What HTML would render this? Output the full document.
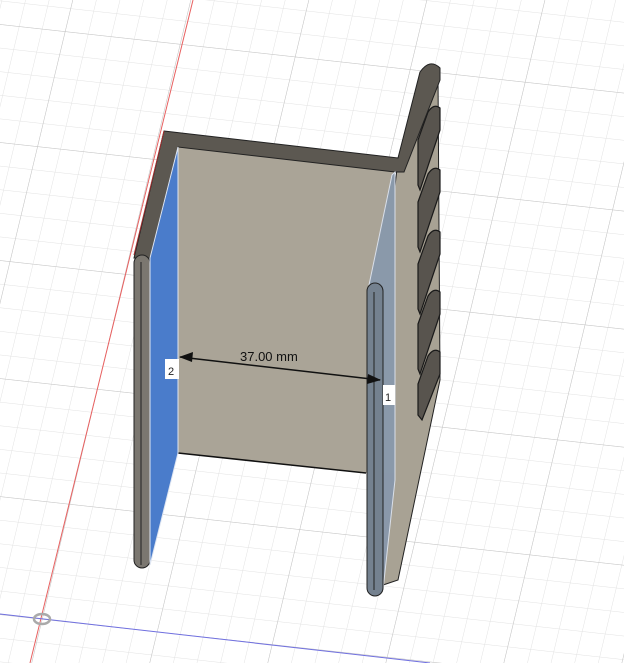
<!DOCTYPE html>
<html><head><meta charset="utf-8"><style>
html,body{margin:0;padding:0;background:#fff;}
svg{display:block;}
</style></head><body>
<svg width="624" height="663" viewBox="0 0 624 663" xmlns="http://www.w3.org/2000/svg">
<defs>
<pattern id="minor" width="23" height="23" patternUnits="userSpaceOnUse" patternTransform="matrix(1,0.11,-0.24,1,42,619)">
<path d="M0 0H23M0 0V23" stroke="#e2e2e2" stroke-width="1" fill="none"/>
</pattern>
<pattern id="major" width="115" height="115" patternUnits="userSpaceOnUse" patternTransform="matrix(1,0.11,-0.24,1,42,619)">
<path d="M0 0H115M0 0V115" stroke="#c4c4c4" stroke-width="1" fill="none"/>
</pattern>
</defs>
<rect width="624" height="663" fill="#fff"/>
<rect width="624" height="663" fill="url(#minor)"/>
<rect width="624" height="663" fill="url(#major)"/>
<line x1="193" y1="0" x2="30" y2="663" stroke="#e86060" stroke-width="1"/>
<line x1="0" y1="614" x2="430" y2="663" stroke="#7070e0" stroke-width="1"/>
<ellipse cx="42" cy="619" rx="8" ry="5" fill="none" stroke="#aaa" stroke-width="2.5"/>

<!-- right exterior beige -->
<polygon points="398,160 438,75 440,380 398,580 383,585 383,290" fill="#a8a294" stroke="#222" stroke-width="1"/>
<!-- fins -->
<g fill="#58544e" stroke="#1a1a1a" stroke-width="1.2">
<path d="M428,112 Q434,103 440,108 L440,130 L420,190 L418,185 L418,140 Z"/>
<path d="M428,174 Q434,165 440,170 L440,192 L420,252 L418,247 L418,202 Z"/>
<path d="M428,236 Q434,227 440,232 L440,254 L420,314 L418,309 L418,264 Z"/>
<path d="M428,296 Q434,287 440,292 L440,314 L420,374 L418,369 L418,324 Z"/>
<path d="M428,356 Q434,347 440,352 L440,374 L422,420 L418,415 L418,384 Z"/>
</g>
<!-- back wall interior -->
<polygon points="178,147 395,172 395,473 365,473 178,453" fill="#aaa497"/>
<line x1="178" y1="453" x2="366" y2="473" stroke="#111" stroke-width="1.5"/>
<!-- top strip + big column -->
<path d="M164,131 L398,158 L420,72 Q430,58 440,68 L440,80 L404,172 L395,172 L178,147 L150,258 L134,258 Z" fill="#5c5851" stroke="#222" stroke-width="1"/>
<line x1="164" y1="131" x2="134" y2="255" stroke="#a03030" stroke-width="1"/>
<!-- left wall -->
<rect x="134" y="255" width="16" height="313" rx="8" fill="#7b7770" stroke="#222" stroke-width="1"/>
<line x1="141" y1="262" x2="141" y2="565" stroke="#222" stroke-width="1"/>
<polygon points="150,258 178,147 178,453 150,565" fill="#4a7ccb" stroke="#dfe6f2" stroke-width="1"/>
<!-- right wall -->
<polygon points="369,285 392,175 395,172 395,480 383,590 383,290" fill="#8798ad" stroke="#dfe6f2" stroke-width="1" opacity="0.9"/>
<rect x="367" y="283" width="16" height="313" rx="8" fill="#74818f" stroke="#222" stroke-width="1"/>
<line x1="374" y1="292" x2="374" y2="590" stroke="#222" stroke-width="1"/>
<!-- dimension -->
<line x1="180" y1="357" x2="380" y2="380" stroke="#111" stroke-width="1.5"/>
<polygon points="179,357 193,352 192,362" fill="#111"/>
<polygon points="381,380 367,384 368,374" fill="#111"/>
<text x="240" y="361" font-family="Liberation Sans, sans-serif" font-size="13" fill="#111">37.00 mm</text>
<rect x="165" y="359" width="14" height="20" fill="#fff"/>
<text x="168" y="375" font-family="Liberation Sans, sans-serif" font-size="11" fill="#222">2</text>
<rect x="383" y="385" width="12" height="20" fill="#fff"/>
<text x="385" y="401" font-family="Liberation Sans, sans-serif" font-size="11" fill="#222">1</text>
</svg>
</body></html>
